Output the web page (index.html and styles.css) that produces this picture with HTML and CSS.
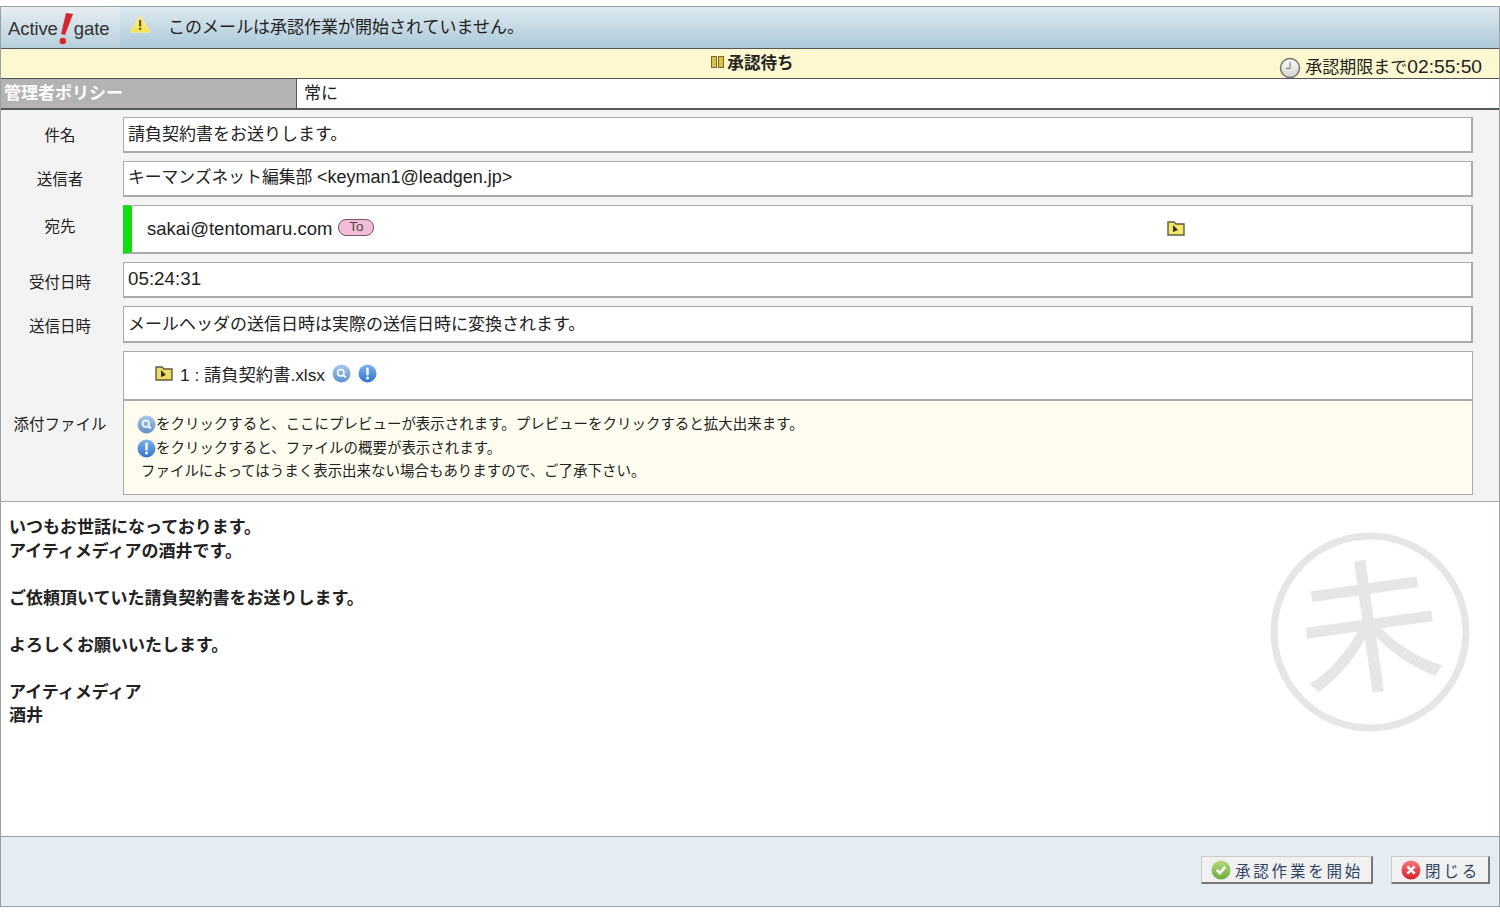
FILE: index.html
```html
<!DOCTYPE html>
<html lang="ja">
<head>
  <meta charset="utf-8">
  <title>Active!gate</title>
  <link rel="stylesheet" href="styles.css">
</head>
<body>
  <!-- shared icon gradients -->
  <svg class="defs" width="0" height="0">
    <defs>
      <linearGradient id="g-search" x1="0" y1="0" x2="0" y2="1"><stop offset="0" stop-color="#a9c8ea"/><stop offset="1" stop-color="#5f8fc9"/></linearGradient>
      <linearGradient id="g-info" x1="0" y1="0" x2="0" y2="1"><stop offset="0" stop-color="#7fb3ee"/><stop offset="1" stop-color="#2f74d0"/></linearGradient>
      <linearGradient id="g-ok" x1="0" y1="0" x2="0" y2="1"><stop offset="0" stop-color="#b5d97f"/><stop offset="1" stop-color="#6bac3a"/></linearGradient>
      <linearGradient id="g-no" x1="0" y1="0" x2="0" y2="1"><stop offset="0" stop-color="#f47a7a"/><stop offset="1" stop-color="#d81f2c"/></linearGradient>
      <linearGradient id="g-warn" x1="0" y1="0" x2="0" y2="1"><stop offset="0" stop-color="#f8efa0"/><stop offset="1" stop-color="#f2e04e"/></linearGradient>
      <linearGradient id="g-clock" x1="0" y1="0" x2="0" y2="1"><stop offset="0" stop-color="#fafafa"/><stop offset="1" stop-color="#d6d6d0"/></linearGradient>
    </defs>
  </svg>

  <section id="window">

    <!-- top bar -->
    <header class="topbar">
      <div class="logo">
        <span>Active</span>
        <svg class="logo-mark" width="15" height="34" viewBox="0 0 15 34"><path d="M7 1 L14 2 L6 23 L2 22 Z" fill="#d8262c"/><circle cx="3.800" cy="29" r="3.200" fill="#d8262c"/></svg>
        <span>gate</span>
      </div>
      <svg class="warn" width="22" height="20" viewBox="0 0 22 20"><path d="M11 1 L20.500 17 Q21 18.500 19.500 18.500 L2.500 18.500 Q1 18.500 1.500 17 Z" fill="url(#g-warn)" stroke="#efe7a0"/><rect x="10" y="6" width="2.200" height="6.500" fill="#6a5a20"/><rect x="10" y="13.800" width="2.200" height="2.200" fill="#6a5a20"/></svg>
      <span class="topbar-msg">このメールは承認作業が開始されていません。</span>
    </header>

    <!-- status -->
    <div class="status">
      <div class="status-title">
        <svg width="13" height="12" viewBox="0 0 13 12"><rect x="0.500" y="0.500" width="5" height="11" fill="#e0c040" stroke="#6d6a3c"/><rect x="7.500" y="0.500" width="5" height="11" fill="#e0c040" stroke="#6d6a3c"/></svg>
        <b>承認待ち</b>
      </div>
      <div class="status-time">
        <svg width="22" height="22" viewBox="0 0 22 22"><circle cx="11" cy="11" r="9.500" fill="url(#g-clock)" stroke="#77776f" stroke-width="1.500"/><path d="M11 5 V11.500 H7" fill="none" stroke="#77776f"/></svg>
        <span>承認期限まで<span class="lat-big">02:55:50</span></span>
      </div>
    </div>

    <div class="policy">
      <div class="policy-name">管理者ポリシー</div>
      <div class="policy-val">常に</div>
    </div>

    <!-- mail info -->
    <section class="info">
      <div class="row">
        <div class="label">件名</div>
        <div class="field">請負契約書をお送りします。</div>
      </div>
      <div class="row">
        <div class="label">送信者</div>
        <div class="field field-sender">キーマンズネット編集部 <span class="lat">&lt;keyman1@leadgen.jp&gt;</span></div>
      </div>
      <div class="row">
        <div class="label label-up">宛先</div>
        <div class="field field-to">
          <span class="addr">sakai@tentomaru.com</span>
          <span class="to-badge">To</span>
          <svg class="to-folder" width="18" height="16" viewBox="0 0 18 16"><path d="M1 15 V2 H7 L9 4 H17 V15 Z" fill="#f4e76a" stroke="#5f5a3c" stroke-width="1.400"/><path d="M6 5 L6 12 L11 10 Z" fill="#333020"/></svg>
        </div>
      </div>
      <div class="row">
        <div class="label label-low">受付日時</div>
        <div class="field field-time"><span class="lat-time">05:24:31</span></div>
      </div>
      <div class="row">
        <div class="label label-low">送信日時</div>
        <div class="field field-sent">メールヘッダの送信日時は実際の送信日時に変換されます。</div>
      </div>
      <div class="row">
        <div class="label label-attach">添付ファイル</div>
        <div class="attach">
          <div class="attach-file">
            <svg width="18" height="16" viewBox="0 0 18 16"><path d="M1 15 V2 H7 L9 4 H17 V15 Z" fill="#eedd66" stroke="#5f5a3c" stroke-width="1.400"/><path d="M6 5 L6 12 L11 10 Z" fill="#333020"/></svg>
            <span>1 : 請負契約書.xlsx</span>
            <svg class="ico-search" width="19" height="19" viewBox="0 0 19 19"><circle cx="9.500" cy="9.500" r="9" fill="url(#g-search)"/><circle cx="8.800" cy="8.800" r="3.200" fill="none" stroke="#fff" stroke-width="1.500"/><path d="M11 11 L14 13.500" stroke="#fff" stroke-width="1.800"/></svg>
            <svg class="ico-info" width="19" height="19" viewBox="0 0 19 19"><circle cx="9.500" cy="9.500" r="9" fill="url(#g-info)"/><rect x="8.300" y="3.500" width="2.400" height="8" rx="1" fill="#fff"/><circle cx="9.500" cy="14" r="1.500" fill="#fff"/></svg>
          </div>
          <div class="attach-note">
            <p><svg width="19" height="19" viewBox="0 0 19 19"><circle cx="9.500" cy="9.500" r="9" fill="url(#g-search)"/><circle cx="8.800" cy="8.800" r="3.200" fill="none" stroke="#fff" stroke-width="1.500"/><path d="M11 11 L14 13.500" stroke="#fff" stroke-width="1.800"/></svg>をクリックすると、ここにプレビューが表示されます。プレビューをクリックすると拡大出来ます。</p>
            <p><svg width="19" height="19" viewBox="0 0 19 19"><circle cx="9.500" cy="9.500" r="9" fill="url(#g-info)"/><rect x="8.300" y="3.500" width="2.400" height="8" rx="1" fill="#fff"/><circle cx="9.500" cy="14" r="1.500" fill="#fff"/></svg>をクリックすると、ファイルの概要が表示されます。</p>
            <p class="note-plain">ファイルによってはうまく表示出来ない場合もありますので、ご了承下さい。</p>
          </div>
        </div>
      </div>
    </section>

    <!-- mail body -->
    <section class="mail">
      <div class="mail-text">いつもお世話になっております。<br>アイティメディアの酒井です。<br><br>ご依頼頂いていた請負契約書をお送りします。<br><br>よろしくお願いいたします。<br><br>アイティメディア<br>酒井</div>
      <svg class="stamp" width="200" height="200" viewBox="0 0 200 200">
        <circle cx="100" cy="100" r="96" fill="none" stroke="#e6e6e6" stroke-width="7"/>
        <text x="100" y="149" text-anchor="middle" transform="rotate(-8 100 100)" class="stamp-char">未</text>
      </svg>
    </section>

    <footer class="footer">
      <button class="btn">
        <svg width="20" height="20" viewBox="0 0 19 19"><circle cx="9.500" cy="9.500" r="9" fill="url(#g-ok)"/><path d="M5.500 9.500 L8.500 12.500 L13.500 6.500" fill="none" stroke="#fff" stroke-width="2.400"/></svg>
        承認作業を開始
      </button>
      <button class="btn">
        <svg width="20" height="20" viewBox="0 0 19 19"><circle cx="9.500" cy="9.500" r="9" fill="url(#g-no)"/><path d="M6 6 L13 13 M13 6 L6 13" fill="none" stroke="#fff" stroke-width="2.400"/></svg>
        閉じる
      </button>
    </footer>
  </section>
</body>
</html>
```

FILE: styles.css
```css
body {
  margin: 0;
  padding: 0;
  background-color: #ffffff;
  color: #222222;
  font-family: "Liberation Sans", "Noto Sans CJK JP", sans-serif;
  font-size: 17px;
}

.defs {
  display: block;
  height: 0;
}

#window {
  display: flex;
  flex-direction: column;
  height: 901px;
  margin-top: 6px;
  border: 1px solid #9a9fa3;
  box-sizing: border-box;
  overflow: hidden;
}

.lat {
  font-size: 18px;
}

.lat-time {
  font-size: 18.800px;
}

.lat-big {
  font-size: 19.200px;
}

/* top bar */
.topbar {
  display: flex;
  align-items: center;
  height: 41px;
  flex: none;
  background: linear-gradient(#dde9f0, #adc9d8);
  border-bottom: 1px solid #4f5558;
}

.logo {
  display: flex;
  align-items: center;
  width: 119px;
  height: 100%;
  box-sizing: border-box;
  padding: 3px 0 0 7px;
  background: linear-gradient(#e6eef3, #b8d0dc);
  font-size: 18.500px;
  letter-spacing: -0.1px;
  color: #333333;
}

.logo-mark {
  margin: 0 0 0 1px;
}

.warn {
  margin: -8px 0 0 9px;
}

.topbar-msg {
  margin: -5px 0 0 17px;
}

/* status */
.status {
  position: relative;
  display: flex;
  justify-content: center;
  align-items: center;
  height: 30px;
  flex: none;
  background-color: #fdf8cf;
  border-bottom: 1px solid #4f5558;
  box-sizing: border-box;
}

.status-title {
  display: flex;
  align-items: center;
  gap: 3px;
  margin: -3px 0 0 5px;
  font-size: 16.600px;
}

.status-time {
  position: absolute;
  top: 6px;
  right: 17px;
  display: flex;
  align-items: center;
  gap: 4px;
  line-height: 24px;
}

/* policy */
.policy {
  display: flex;
  height: 31px;
  flex: none;
  border-bottom: 2px solid #55595b;
  box-sizing: border-box;
}

.policy-name {
  width: 296px;
  flex: none;
  box-sizing: border-box;
  padding: 0 0 0 3px;
  background-color: #b3b3b3;
  color: #ffffff;
  font-weight: bold;
  border-right: 1px solid #4f5558;
}

.policy-val {
  padding: 0 0 0 7px;
}

/* info */
.info {
  display: flex;
  flex-direction: column;
  gap: 8px;
  flex: none;
  height: 392px;
  box-sizing: border-box;
  padding: 7px 26px 0 0;
  background-color: #f3f3f3;
  border-bottom: 1px solid #a8a8a8;
}

.row {
  display: flex;
}

.label {
  width: 118px;
  margin-right: 4px;
  flex: none;
  padding-top: 6px;
  text-align: center;
  font-size: 15.500px;
}

.label-up {
  padding-top: 9px;
}

.label-low {
  padding-top: 8px;
}

.label-attach {
  align-self: center;
  padding-top: 0;
}

.field {
  flex: 1;
  box-sizing: border-box;
  height: 36px;
  padding: 2px 0 0 4px;
  background-color: #ffffff;
  border: 2px solid #aaaaaa;
  border-width: 1px 2px 2px 1px;
}

.field-sender {
  font-size: 16.800px;
}

.field-time {
  padding-top: 5px;
}

.field-sent {
  height: 37px;
  padding-top: 3px;
}

.field-to {
  position: relative;
  display: flex;
  align-items: center;
  height: 49px;
  padding: 0 0 0 15px;
  border-left: 9px solid #12dc12;
}

.addr {
  font-size: 18.500px;
  margin-top: -1px;
}

.to-badge {
  margin: -4px 0 0 6px;
  width: 34px;
  height: 15px;
  line-height: 14px;
  text-align: center;
  font-size: 13.500px;
  color: #444444;
  background-color: #f5bcd8;
  border: 1px solid #6f5a66;
  border-radius: 8px;
}

.to-folder {
  position: absolute;
  left: 1035px;
  top: 14px;
}

.attach {
  flex: 1;
  box-sizing: border-box;
  height: 144px;
  border: 1px solid #aaaaaa;
}

.attach-file {
  display: flex;
  align-items: center;
  height: 49px;
  padding: 0 0 5px 31px;
  background-color: #ffffff;
  border-bottom: 2px solid #aaaaaa;
  box-sizing: border-box;
}

.attach-file span {
  margin-left: 7px;
  font-size: 17.300px;
}

.ico-search {
  margin-left: 7px;
}

.ico-info {
  margin-left: 7px;
}

.attach-note {
  height: 93px;
  padding: 10px 0 0 13px;
  box-sizing: border-box;
  background-color: #fdfcee;
  font-size: 14.470px;
}

.attach-note p {
  display: flex;
  align-items: center;
  height: 23.500px;
  margin: 0;
}

.attach-note svg {
  margin-top: 4px;
}

.note-plain {
  padding-left: 4px;
}

/* mail */
.mail {
  position: relative;
  flex: 1;
  background-color: #ffffff;
  border-bottom: 1px solid #9a9fa3;
  padding: 14px 0 0 8px;
}

.mail-text {
  font-weight: bold;
  line-height: 23.500px;
}

.stamp {
  position: absolute;
  top: 30px;
  right: 29px;
}

.stamp-char {
  font-size: 144px;
  fill: #e6e6e6;
  font-weight: 400;
}

/* footer */
.footer {
  display: flex;
  justify-content: flex-end;
  gap: 18px;
  height: 69px;
  flex: none;
  box-sizing: border-box;
  padding: 19px 9px 0 0;
  background-color: #e3edf3;
}

.btn {
  display: flex;
  align-items: center;
  gap: 4px;
  height: 28px;
  padding: 0 8px 0 9px;
  color: #2e4566;
  font-family: "Liberation Sans", "Noto Sans CJK JP", sans-serif;
  font-size: 15.500px;
  letter-spacing: 2.800px;
  background-color: #f1f1f1;
  border: 1px solid #cccccc;
  border-right: 2px solid #777777;
  border-bottom: 2px solid #777777;
  cursor: pointer;
}
```
